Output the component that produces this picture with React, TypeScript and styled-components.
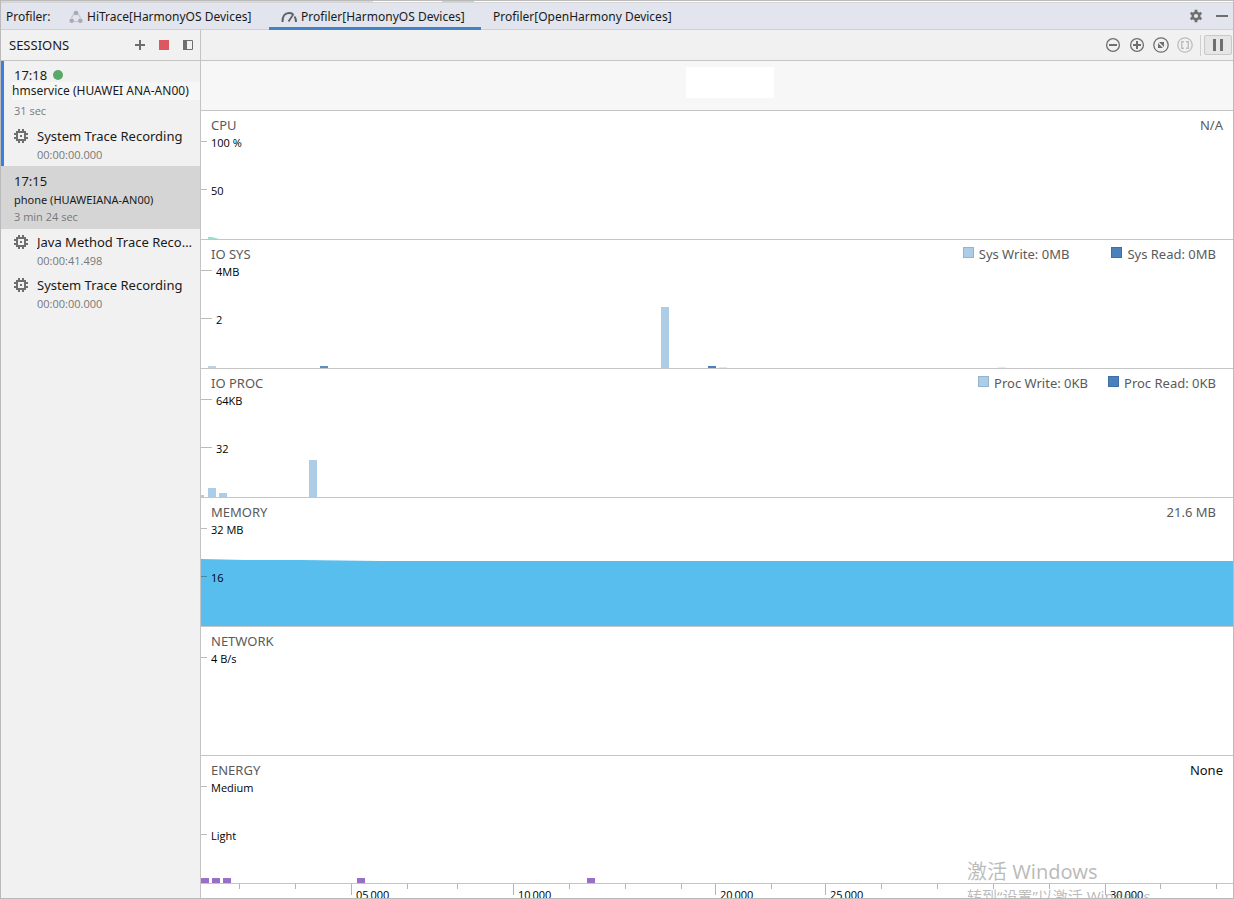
import React from "react";
import styled, { createGlobalStyle } from "styled-components";

const line = "#c4c4c4";
const compactFont = `"Open Sans", "Noto Sans CJK SC", sans-serif`;

const GlobalStyle = createGlobalStyle`
  * { box-sizing: border-box; }
  body { margin: 0; background: #fff; }
  body, button {
    font-family: "Noto Sans", "Noto Sans CJK SC", sans-serif;
    font-size: 13px;
    color: #1a1a1a;
  }
  button { margin: 0; padding: 0; border: 0; background: none; cursor: pointer; }
  svg { display: block; }
`;

const Window = styled.div`
  display: flex;
  flex-direction: column;
  min-height: 100vh;
  border: 1px solid #bababa;
  position: relative;
  overflow: hidden;
`;

const TopStrip = styled.div`
  display: flex;
  height: 2px;
  background: #fff;
  border-bottom: 1px solid #d4d4d4;
`;

const StripPart = styled.div<{ $span: number; $tone: string }>`
  flex: ${(p) => p.$span} 0 0;
  background: ${(p) => p.$tone};
`;

const TabBar = styled.header`
  display: flex;
  align-items: stretch;
  height: 27px;
  background: #e2e5ed;
  border-bottom: 1px solid #d0d0d0;
  font-size: 12px;
`;

const BarLabel = styled.span`
  width: 56px;
  padding-left: 5px;
  line-height: 27px;
  font-size: 12px;
`;

const Tabs = styled.nav`
  display: flex;
  flex: 1;
`;

const Tab = styled.button<{ $active?: boolean; $width: number }>`
  display: flex;
  align-items: center;
  gap: 4px;
  width: ${(p) => p.$width}px;
  padding: 0 12px;
  height: 27px;
  font-size: 12px;
  white-space: nowrap;
  border-bottom: 3px solid ${(p) => (p.$active ? "#4083c9" : "transparent")};
  border-top: 3px solid transparent;
`;

const BarTools = styled.div`
  display: flex;
  align-items: center;
  gap: 13px;
  padding-right: 5px;
`;

const Body = styled.div`
  display: flex;
  flex: 1;
`;

const Sidebar = styled.aside`
  width: 200px;
  flex: none;
  background: #f1f1f1;
  border-right: 1px solid ${line};
`;

const SidebarHead = styled.div`
  display: flex;
  align-items: center;
  gap: 12px;
  height: 31px;
  padding: 0 6px 0 8px;
  border-bottom: 1px solid ${line};
`;

const SidebarTitle = styled.h2`
  flex: 1;
  margin: 0;
  font-size: 13px;
  font-weight: 400;
`;

const IconButton = styled.button`
  display: flex;
  align-items: center;
  justify-content: center;
`;

const SessionGroup = styled.section<{ $live?: boolean }>`
  border-left: 3px solid ${(p) => (p.$live ? "#3b7ee3" : "transparent")};
`;

const SessionHead = styled.div<{ $selected?: boolean }>`
  height: ${(p) => (p.$selected ? 63 : 62)}px;
  margin-left: ${(p) => (p.$selected ? -3 : 0)}px;
  padding: ${(p) => (p.$selected ? "8px 0 0 13px" : "7px 0 0 10px")};
  background: ${(p) => (p.$selected ? "#d5d5d5" : "transparent")};
`;

const SessionTime = styled.div`
  display: flex;
  align-items: center;
  gap: 6px;
  font-size: 13px;
  line-height: 14px;
`;

const LiveDot = styled.span`
  width: 10px;
  height: 10px;
  border-radius: 50%;
  background: #59a869;
`;

const DeviceName = styled.div<{ $bright?: boolean }>`
  margin: ${(p) => (p.$bright ? "0 0 3px -2px" : "3px 0 0")};
  font-size: ${(p) => (p.$bright ? 12 : 11)}px;
  line-height: 18px;
  white-space: nowrap;
  background: ${(p) => (p.$bright ? "#f7f7f7" : "transparent")};
`;

const Muted = styled.div`
  font-family: ${compactFont};
  font-size: 11px;
  line-height: 16px;
  color: #787878;
`;

const Recording = styled.button`
  display: flex;
  align-items: flex-start;
  gap: 9px;
  width: 100%;
  height: 43px;
  padding: 2px 0 0 10px;
  text-align: left;
`;

const IconSlot = styled.span`
  padding-top: 4px;
`;

const RecordingText = styled.div`
  flex: 1;
  min-width: 0;
`;

const RecordingName = styled.div`
  font-size: 13px;
  line-height: 22px;
  white-space: nowrap;
  overflow: hidden;
  text-overflow: ellipsis;
  padding-right: 3px;
`;

const Main = styled.main`
  display: flex;
  flex: 1;
  flex-direction: column;
  min-width: 0;
`;

const Toolbar = styled.div`
  display: flex;
  align-items: center;
  justify-content: flex-end;
  gap: 8px;
  height: 31px;
  background: #f1f1f1;
  border-bottom: 1px solid ${line};
`;

const PauseGroup = styled.div`
  display: flex;
  align-items: center;
  height: 21px;
  padding: 0 1px 0 3px;
  border-left: 1px solid #d0d0d0;
  margin-left: -1px;
`;

const PauseButton = styled(IconButton)`
  width: 28px;
  height: 20px;
  border: 1px solid #c9c9c9;
  border-radius: 2px;
  background: #e6e6e6;
`;

const EventStrip = styled.div`
  display: flex;
  justify-content: center;
  height: 50px;
  padding: 6px 0 12px 26px;
  background: #f7f7f7;
  border-bottom: 1px solid ${line};
`;

const BlankBox = styled.div`
  width: 88px;
  background: #fff;
`;

const Panel = styled.section<{ $fill?: boolean }>`
  position: relative;
  flex: ${(p) => (p.$fill ? "1 0 128px" : "0 0 129px")};
  background: #fff;
  border-bottom: 1px solid ${line};
`;

const Plot = styled.svg`
  position: absolute;
  inset: 0;
  width: 100%;
  height: 100%;
`;

const PanelContent = styled.div`
  position: relative;
`;

const PanelHead = styled.div<{ $wide?: boolean }>`
  display: flex;
  justify-content: space-between;
  height: 24px;
  padding: 4px ${(p) => (p.$wide ? 17 : 10)}px 0 10px;
  font-size: 13px;
  line-height: 20px;
  color: #5a5a5a;
`;

const PanelTitle = styled.h3`
  margin: 0;
  font-size: 13px;
  font-weight: 400;
`;

const PanelValue = styled.span<{ $dark?: boolean }>`
  color: ${(p) => (p.$dark ? "#111" : "#5a5a5a")};
`;

const Legend = styled.div<{ $gap: number }>`
  display: flex;
  gap: ${(p) => p.$gap}px;
`;

const LegendItem = styled.span`
  display: flex;
  gap: 5px;
`;

const Swatch = styled.span<{ $dark?: boolean }>`
  width: 11px;
  height: 11px;
  margin-top: 3px;
  background: ${(p) => (p.$dark ? "#4a80bd" : "#adcde6")};
  border: 1px solid ${(p) => (p.$dark ? "#416fa5" : "#94b4cd")};
`;

const Scale = styled.div`
  display: flex;
  flex-direction: column;
`;

const ScaleMark = styled.div<{ $long?: boolean }>`
  display: flex;
  height: 48px;
  gap: 4px;
  font-family: ${compactFont};
  font-size: 11px;
  line-height: 16px;
  color: #000;
  &::before {
    content: "";
    width: ${(p) => (p.$long ? 11 : 6)}px;
    height: 1px;
    margin-top: 6px;
    background: rgba(0, 0, 0, 0.27);
  }
`;

const Axis = styled.div`
  display: flex;
  height: 14px;
  overflow: hidden;
  background: #fff;
`;

const AxisPart = styled.div<{ $span: number; $mark: "none" | "minor" | "major" }>`
  display: flex;
  flex: ${(p) => p.$span} 0 0;
  min-width: 0;
  gap: 4px;
  font-family: ${compactFont};
  font-size: 11px;
  line-height: 22px;
  white-space: nowrap;
  color: #000;
  &::before {
    content: "";
    flex: none;
    width: ${(p) => (p.$mark === "none" ? 0 : 1)}px;
    height: ${(p) => (p.$mark === "major" ? 11 : 5)}px;
    background: #b4b4b4;
  }
`;

const Watermark = styled.div`
  position: absolute;
  right: 78px;
  bottom: -9px;
  width: 188px;
  color: rgba(120, 120, 120, 0.5);
  white-space: nowrap;
  pointer-events: none;
`;

const WatermarkTitle = styled.div`
  font-size: 20px;
  line-height: 26px;
`;

const WatermarkNote = styled.div`
  font-size: 15px;
  line-height: 22px;
`;

const ChipIcon = () => (
  <svg width="14" height="14" viewBox="0 0 14 14" fill="none" stroke="#6e6e6e" aria-hidden="true">
    <rect x="3" y="3" width="8" height="8" strokeWidth="2" />
    <path d="M5 0v2M9 0v2M5 12v2M9 12v2M0 5h2M0 9h2M12 5h2M12 9h2" strokeWidth="2" />
    <rect x="6" y="6" width="2" height="2" fill="#6e6e6e" stroke="none" />
  </svg>
);

const TraceIcon = () => (
  <svg width="14" height="14" viewBox="0 0 14 14" aria-hidden="true">
    <path d="M5 3.5L2.5 8M9 3.5l2.5 4.5M5 11.5h4" fill="none" stroke="#c3c5ca" strokeWidth="1.2" />
    <g fill="#a9abb0">
      <circle cx="7" cy="3" r="2.3" />
      <circle cx="2.7" cy="10.7" r="2.3" />
      <circle cx="11.3" cy="10.7" r="2.3" />
    </g>
  </svg>
);

const GaugeIcon = () => (
  <svg width="16" height="14" viewBox="0 0 16 14" fill="none" stroke="#5f6265" strokeWidth="2" aria-hidden="true">
    <path d="M1.5 12C1.2 6 4 3 8 3c2 0 3.2.5 4 1.2" />
    <path d="M13.5 6.5C14.6 8 15 10 15 12" />
    <path d="M12.5 4L7.5 11.5" strokeWidth="1.8" />
  </svg>
);

const GearIcon = () => (
  <svg width="14" height="14" viewBox="0 0 14 14" fill="none" stroke="#6e6e6e" aria-hidden="true">
    <circle cx="7" cy="7" r="3.3" strokeWidth="2.4" />
    <path
      d="M7 .8v2.4M7 10.8v2.4M1.63 3.9l2.08 1.2M10.29 8.9l2.08 1.2M1.63 10.1l2.08-1.2M10.29 5.1l2.08-1.2"
      strokeWidth="2.8"
    />
  </svg>
);

const MinimizeIcon = () => (
  <svg width="12" height="14" viewBox="0 0 12 14" aria-hidden="true">
    <path d="M0 6h12v2H0z" fill="#6e6e6e" />
  </svg>
);

const PlusIcon = () => (
  <svg width="12" height="12" viewBox="0 0 12 12" aria-hidden="true">
    <path d="M6 1v10M1 6h10" stroke="#6e6e6e" strokeWidth="2" />
  </svg>
);

const StopIcon = () => (
  <svg width="12" height="12" viewBox="0 0 12 12" aria-hidden="true">
    <path d="M1 1h10v10H1z" fill="#db5860" />
  </svg>
);

const SplitIcon = () => (
  <svg width="12" height="12" viewBox="0 0 12 12" aria-hidden="true">
    <path d="M1.5 1.5h9v9h-9z" fill="none" stroke="#6e6e6e" />
    <path d="M1 1h4v10H1z" fill="#6e6e6e" />
  </svg>
);

const RoundIcon = ({ kind }: { kind: "out" | "in" | "reset" | "selection" }) => {
  const small = kind === "out" || kind === "in";
  return (
    <svg
      width="16"
      height="16"
      viewBox="0 0 16 16"
      fill="none"
      stroke={kind === "selection" ? "#bdbdbd" : "#6e6e6e"}
      aria-hidden="true"
    >
      <circle cx="8" cy="8" r={small ? 6.4 : 7.2} strokeWidth="1.3" />
      {small && <path d="M4 8h8" strokeWidth="2" />}
      {kind === "in" && <path d="M8 4v8" strokeWidth="2" />}
      {kind === "reset" && <path d="M6 5h5v5zM5 6v5h5z" fill="#6e6e6e" stroke="none" />}
      {kind === "selection" && <path d="M7 4.7H4.7v6.6H7M9 4.7h2.3v6.6H9" strokeWidth="1.4" />}
    </svg>
  );
};

const PauseIcon = () => (
  <svg width="10" height="12" viewBox="0 0 10 12" aria-hidden="true">
    <path d="M0 0h3v12H0zM7 0h3v12H7z" fill="#6e6e6e" />
  </svg>
);

type Bar = { x: number; w?: number; h: number; fill: string };

const light = "#adcde6";
const dark = "#4a80bd";
const violet = "#976fc6";

const Bars = ({ bars }: { bars: Bar[] }) => (
  <Plot viewBox="0 0 1032 128" preserveAspectRatio="none" aria-hidden="true">
    {bars.map((b) => (
      <rect key={b.x} x={b.x} y={128 - b.h} width={b.w ?? 8} height={b.h} fill={b.fill} />
    ))}
  </Plot>
);

type PanelProps = {
  title: string;
  marks: string[];
  long?: boolean;
  wide?: boolean;
  fill?: boolean;
  side?: React.ReactNode;
  children?: React.ReactNode;
};

const MetricPanel = ({ title, marks, long, wide, fill, side, children }: PanelProps) => (
  <Panel $fill={fill}>
    {children}
    <PanelContent>
      <PanelHead $wide={wide}>
        <PanelTitle>{title}</PanelTitle>
        {side}
      </PanelHead>
      <Scale>
        {marks.map((m) => (
          <ScaleMark key={m} $long={long}>
            {m}
          </ScaleMark>
        ))}
      </Scale>
    </PanelContent>
  </Panel>
);

const RecordingItem = ({ name, time }: { name: string; time: string }) => (
  <Recording type="button">
    <IconSlot>
      <ChipIcon />
    </IconSlot>
    <RecordingText>
      <RecordingName>{name}</RecordingName>
      <Muted>{time}</Muted>
    </RecordingText>
  </Recording>
);

const axisParts: { span: number; mark: "none" | "minor" | "major"; label?: string }[] = [
  { span: 38, mark: "none" },
  { span: 56, mark: "minor" },
  { span: 56, mark: "minor" },
  { span: 56, mark: "major", label: "05\u2009000" },
  { span: 50, mark: "minor" },
  { span: 56, mark: "minor" },
  { span: 56, mark: "major", label: "10\u2009000" },
  { span: 56, mark: "minor" },
  { span: 56, mark: "minor" },
  { span: 34, mark: "minor" },
  { span: 56, mark: "major", label: "20\u2009000" },
  { span: 54, mark: "minor" },
  { span: 56, mark: "major", label: "25\u2009000" },
  { span: 56, mark: "minor" },
  { span: 56, mark: "minor" },
  { span: 56, mark: "minor" },
  { span: 56, mark: "minor" },
  { span: 55, mark: "major", label: "30\u2009000" },
  { span: 56, mark: "minor" },
  { span: 17, mark: "minor" },
];

export default function App() {
  return (
    <>
      <GlobalStyle />
      <Window>
        <TopStrip>
          <StripPart $span={372} $tone="#d9d9d9" />
          <StripPart $span={69} $tone="#ffffff" />
          <StripPart $span={32} $tone="#cfcfcf" />
          <StripPart $span={759} $tone="#ffffff" />
        </TopStrip>
        <TabBar>
          <BarLabel>Profiler:</BarLabel>
          <Tabs>
            <Tab type="button" $width={212}>
              <TraceIcon />
              HiTrace[HarmonyOS Devices]
            </Tab>
            <Tab type="button" $active $width={212}>
              <GaugeIcon />
              Profiler[HarmonyOS Devices]
            </Tab>
            <Tab type="button" $width={212}>
              Profiler[OpenHarmony Devices]
            </Tab>
          </Tabs>
          <BarTools>
            <IconButton type="button" aria-label="Settings">
              <GearIcon />
            </IconButton>
            <IconButton type="button" aria-label="Hide">
              <MinimizeIcon />
            </IconButton>
          </BarTools>
        </TabBar>
        <Body>
          <Sidebar>
            <SidebarHead>
              <SidebarTitle>SESSIONS</SidebarTitle>
              <IconButton type="button" aria-label="New session">
                <PlusIcon />
              </IconButton>
              <IconButton type="button" aria-label="Stop session">
                <StopIcon />
              </IconButton>
              <IconButton type="button" aria-label="Collapse sessions">
                <SplitIcon />
              </IconButton>
            </SidebarHead>
            <SessionGroup $live>
              <SessionHead>
                <SessionTime>
                  17:18
                  <LiveDot />
                </SessionTime>
                <DeviceName $bright>hmservice (HUAWEI ANA-AN00)</DeviceName>
                <Muted>31 sec</Muted>
              </SessionHead>
              <RecordingItem name="System Trace Recording" time="00:00:00.000" />
            </SessionGroup>
            <SessionGroup>
              <SessionHead $selected>
                <SessionTime>17:15</SessionTime>
                <DeviceName>phone (HUAWEIANA-AN00)</DeviceName>
                <Muted>3 min 24 sec</Muted>
              </SessionHead>
              <RecordingItem name="Java Method Trace Recording" time="00:00:41.498" />
              <RecordingItem name="System Trace Recording" time="00:00:00.000" />
            </SessionGroup>
          </Sidebar>
          <Main>
            <Toolbar>
              <IconButton type="button" aria-label="Zoom out">
                <RoundIcon kind="out" />
              </IconButton>
              <IconButton type="button" aria-label="Zoom in">
                <RoundIcon kind="in" />
              </IconButton>
              <IconButton type="button" aria-label="Reset zoom">
                <RoundIcon kind="reset" />
              </IconButton>
              <IconButton type="button" aria-label="Zoom to selection">
                <RoundIcon kind="selection" />
              </IconButton>
              <PauseGroup>
                <PauseButton type="button" aria-label="Pause">
                  <PauseIcon />
                </PauseButton>
              </PauseGroup>
            </Toolbar>
            <EventStrip>
              <BlankBox />
            </EventStrip>
            <MetricPanel title="CPU" marks={["100 %", "50"]} side={<PanelValue>N/A</PanelValue>}>
              <Plot viewBox="0 0 1032 128" preserveAspectRatio="none" aria-hidden="true">
                <path d="M7 126l4 0 7 2H7z" fill="#9fdcd0" />
              </Plot>
            </MetricPanel>
            <MetricPanel
              title="IO SYS"
              marks={["4MB", "2"]}
              long
              wide
              side={
                <Legend $gap={42}>
                  <LegendItem><Swatch />Sys Write: 0MB</LegendItem>
                  <LegendItem><Swatch $dark />Sys Read: 0MB</LegendItem>
                </Legend>
              }
            >
              <Bars
                bars={[
                  { x: 7, h: 2, fill: "#bdd3e6" },
                  { x: 119, h: 2, fill: "#5f8dc2" },
                  { x: 460, h: 61, fill: light },
                  { x: 507, h: 2, fill: dark },
                  { x: 518, h: 1, fill: "#dce8f2" },
                  { x: 797, h: 1, fill: "#e2ebf3" },
                ]}
              />
            </MetricPanel>
            <MetricPanel
              title="IO PROC"
              marks={["64KB", "32"]}
              long
              wide
              side={
                <Legend $gap={20}>
                  <LegendItem><Swatch />Proc Write: 0KB</LegendItem>
                  <LegendItem><Swatch $dark />Proc Read: 0KB</LegendItem>
                </Legend>
              }
            >
              <Bars
                bars={[
                  { x: 0, w: 3, h: 2, fill: light },
                  { x: 7, h: 9, fill: light },
                  { x: 18, h: 4, fill: light },
                  { x: 108, h: 37, fill: light },
                ]}
              />
            </MetricPanel>
            <MetricPanel title="MEMORY" marks={["32 MB", "16"]} wide side={<PanelValue>21.6 MB</PanelValue>}>
              <Plot viewBox="0 0 1032 128" preserveAspectRatio="none" aria-hidden="true">
                <path d="M0 61L45 62 100 62 180 63H1032V128H0z" fill="#57beee" />
              </Plot>
            </MetricPanel>
            <MetricPanel title="NETWORK" marks={["4 B/s"]} />
            <MetricPanel title="ENERGY" marks={["Medium", "Light"]} fill side={<PanelValue $dark>None</PanelValue>}>
              <Bars
                bars={[
                  { x: 0, h: 5, fill: violet },
                  { x: 11, h: 5, fill: violet },
                  { x: 22, h: 5, fill: violet },
                  { x: 156, h: 5, fill: violet },
                  { x: 386, h: 5, fill: violet },
                ]}
              />
            </MetricPanel>
            <Axis>
              {axisParts.map((p, i) => (
                <AxisPart key={i} $span={p.span} $mark={p.mark}>
                  {p.label}
                </AxisPart>
              ))}
            </Axis>
          </Main>
        </Body>
        <Watermark>
          <WatermarkTitle>激活 Windows</WatermarkTitle>
          <WatermarkNote>转到“设置”以激活 Windows。</WatermarkNote>
        </Watermark>
      </Window>
    </>
  );
}
